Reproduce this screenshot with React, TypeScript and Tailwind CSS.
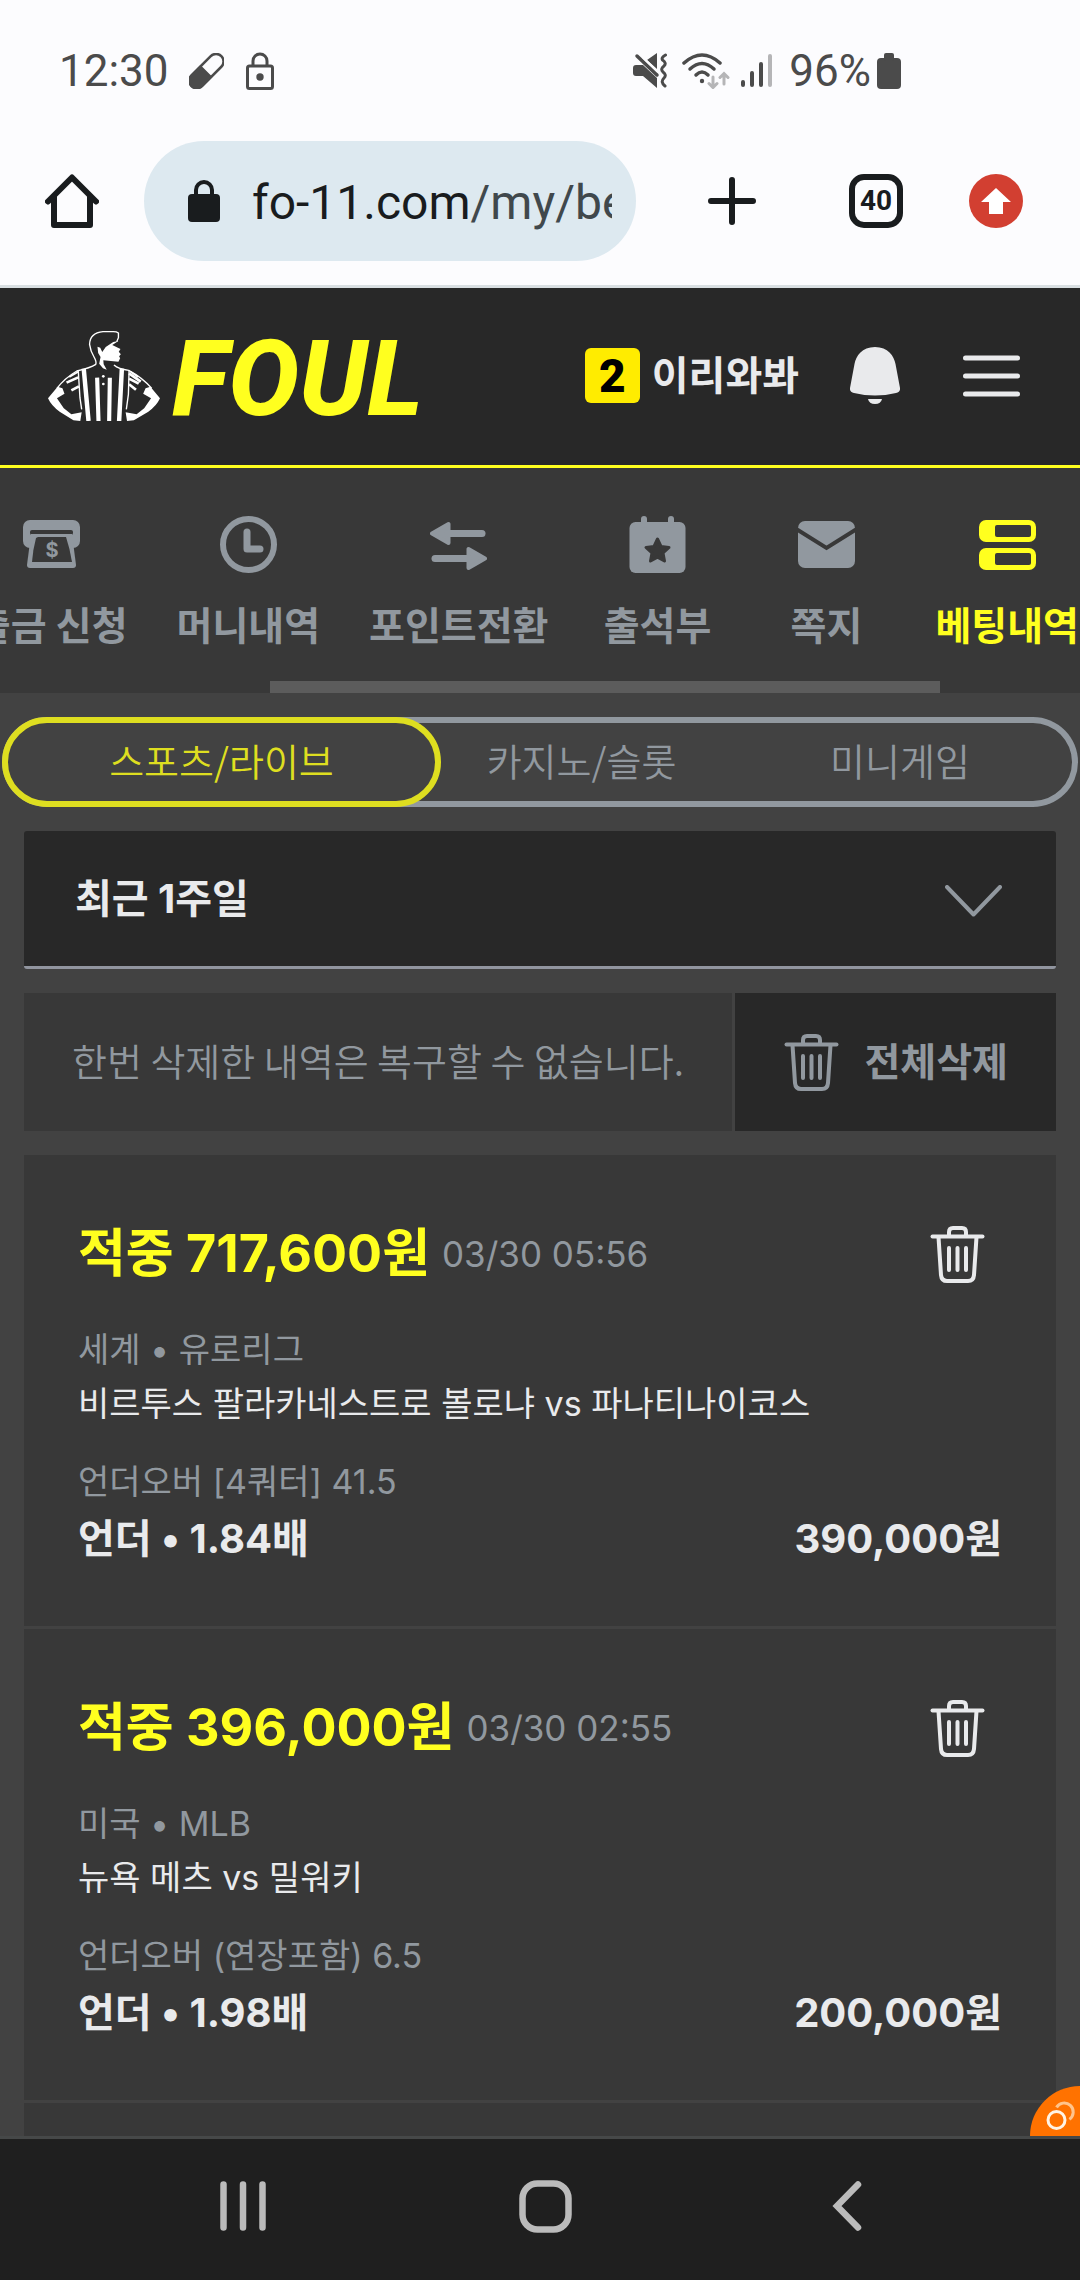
import type { ReactNode } from "react";

interface Bet {
  payout: string;
  date: string;
  league: string;
  match: string;
  market: string;
  pick: string;
  stake: string;
}

const bets: Bet[] = [
  {
    payout: "적중 717,600원",
    date: "03/30 05:56",
    league: "세계 • 유로리그",
    match: "비르투스 팔라카네스트로 볼로냐 vs 파나티나이코스",
    market: "언더오버 [4쿼터] 41.5",
    pick: "언더 • 1.84배",
    stake: "390,000원",
  },
  {
    payout: "적중 396,000원",
    date: "03/30 02:55",
    league: "미국 • MLB",
    match: "뉴욕 메츠 vs 밀워키",
    market: "언더오버 (연장포함) 6.5",
    pick: "언더 • 1.98배",
    stake: "200,000원",
  },
];

function WithdrawIcon() {
  return (
    <svg width="57" height="57" viewBox="0 0 57 57" fill="currentColor">
      <rect x="0" y="4" width="57" height="28" rx="7" />
      <rect x="7" y="14" width="43" height="5" rx="2" fill="#383838" />
      <path d="M8 18 H49 L53 49 Q53 52 50 52 H7 Q4 52 4 49 Z" />
      <path d="M15 21 H43 Q47 33 49 46 H9 Q10 33 13 22 Z" fill="#383838" />
      <text x="29" y="41" textAnchor="middle" className="font-['Inter'] text-[20px] font-bold">
        $
      </text>
    </svg>
  );
}

function ClockIcon() {
  return (
    <svg width="57" height="57" viewBox="0 0 57 57" fill="none" stroke="currentColor">
      <circle cx="28.5" cy="28.5" r="25.5" strokeWidth="6" />
      <path d="M27 16 V33 H40" strokeWidth="7" strokeLinecap="round" strokeLinejoin="round" />
    </svg>
  );
}

function TransferIcon() {
  return (
    <svg width="57" height="57" viewBox="0 0 57 57" fill="currentColor" stroke="currentColor" strokeLinejoin="round" strokeLinecap="round">
      <path d="M2 17.5 L18.5 8 V27 Z" strokeWidth="4" />
      <path d="M18 17.5 H52" strokeWidth="7" />
      <path d="M55 42.5 L38.5 33 V52 Z" strokeWidth="4" />
      <path d="M5 42.5 H38" strokeWidth="7" />
    </svg>
  );
}

function CalendarIcon() {
  return (
    <svg width="57" height="57" viewBox="0 0 57 57" fill="currentColor">
      <rect x="0.5" y="6" width="56" height="51" rx="6" />
      <rect x="12" y="0" width="6" height="12" rx="3" />
      <rect x="39" y="0" width="6" height="12" rx="3" />
      <path
        d="M28.5 23 L32 30.5 L40 31.5 L34 37 L35.5 45 L28.5 41.2 L21.5 45 L23 37 L17 31.5 L25 30.5 Z"
        fill="#383838"
        stroke="#383838"
        strokeWidth="3"
        strokeLinejoin="round"
      />
    </svg>
  );
}

function MailIcon() {
  return (
    <svg width="57" height="57" viewBox="0 0 57 57">
      <rect x="0" y="5" width="57" height="47" rx="7" fill="currentColor" />
      <path d="M-1 13.5 L28.5 32 L58 13.5" fill="none" stroke="#383838" strokeWidth="4" />
    </svg>
  );
}

function SlipIcon() {
  return (
    <svg width="57" height="57" viewBox="0 0 57 57">
      <rect x="0" y="4" width="57" height="22" rx="7" fill="currentColor" />
      <rect x="0" y="32" width="57" height="22" rx="7" fill="currentColor" />
      <rect x="16" y="9" width="36" height="12" rx="2" fill="#383838" />
      <rect x="16" y="37" width="36" height="12" rx="2" fill="#383838" />
    </svg>
  );
}

function TrashIcon() {
  return (
    <svg width="57" height="57" viewBox="0 0 57 57" fill="none" stroke="currentColor" strokeWidth="4" strokeLinecap="round" strokeLinejoin="round">
      <path d="M3.5 10.5 H53.5" />
      <path d="M20 10 V6 Q20 2 24 2 H33 Q37 2 37 6 V10" />
      <path d="M9.5 11 L12 49 Q12.5 55 18 55 H39 Q44.5 55 45 49 L47.5 11" />
      <path d="M20 22 V44 M28.5 22 V44 M37 22 V44" />
    </svg>
  );
}

function RefereeLogo() {
  return (
    <svg width="112" height="90" viewBox="0 0 326 270" preserveAspectRatio="none" fill="none" stroke="#fff">
      <path
        d="M200 32 L205 20 V6 Q200 2 190 2 H160 Q122 6 121 40 Q124 62 134 78 Q142 92 139 100 Q124 110 84 120 Q48 142 26 172"
        strokeWidth="4"
      />
      <path d="M192 102 Q205 114 235 118 Q275 140 302 172" strokeWidth="4" />
      <path
        d="M144 47 L152 50 L158 63 L168 48 L190 33 L205 30 L187 42 L211 54 L206 62 L212 70 L207 76 L210 82 L205 92 L161 88 L162 100 L171 116 L160 112 L149 98 L153 78 L146 66 Z"
        fill="#fff"
        stroke="none"
      />
      <path d="M104 113 L118 270 M215 113 L207 270" strokeWidth="13" />
      <path d="M143 140 L147 270 M180 140 L178 270" strokeWidth="12" />
      <path d="M88 118 L93 200 L98 235 M236 118 L234 190 L228 235" strokeWidth="4" />
      <path d="M54 155 L88 139 M68 178 L90 166 M236 127 L270 152 M236 143 L264 158 M236 160 L256 176" strokeWidth="8" />
      <path d="M62 138 L88 122 M262 138 L240 122" strokeWidth="5" />
      <path
        d="M28 167 L0 202 Q10 225 34 242 L74 268 L94 270 L98 244 L68 250 L46 232 L26 202 L48 188 L42 172 Z"
        fill="#fff"
        stroke="none"
      />
      <path
        d="M298 167 L326 202 Q316 225 292 242 L250 268 L230 270 L226 244 L258 250 L280 232 L300 202 L277 188 L284 172 Z"
        fill="#fff"
        stroke="none"
      />
      <circle cx="161" cy="136" r="4" fill="#fff" stroke="none" />
      <circle cx="161" cy="159" r="4" fill="#fff" stroke="none" />
    </svg>
  );
}

function StatusBar() {
  return (
    <div className="flex h-[141px] items-center pl-[59px] pr-[179px] font-['Roboto',sans-serif] text-[44px] text-[#4b4b4b]">
      <span>12:30</span>
      <svg className="ml-5" width="35" height="36" viewBox="0 0 35 36">
        <g transform="rotate(45 17.5 18)">
          <rect x="10" y="-3" width="15" height="42" rx="7.5" fill="none" stroke="currentColor" strokeWidth="2.5" />
          <path d="M9 18 H26 V32 A8.5 8.5 0 0 1 9 32 Z" fill="currentColor" />
        </g>
      </svg>
      <svg className="ml-[22px]" width="28" height="38" viewBox="0 0 28 38" fill="none" stroke="currentColor" strokeWidth="3">
        <rect x="1.5" y="14" width="25" height="22.5" rx="2" />
        <path d="M7 14 V9 A7 7 0 0 1 21 9 V14" />
        <circle cx="14" cy="25" r="3.7" fill="currentColor" stroke="none" />
      </svg>
      <svg className="ml-auto" width="34" height="35" viewBox="0 0 34 35">
        <path d="M3 12 H10 L24 25 V35 L10 23 H3 Q0 23 0 20 V15 Q0 12 3 12 Z M14 7 L24 0 V16 Z" fill="currentColor" />
        <path d="M4 3 L24 22" stroke="currentColor" strokeWidth="3.5" strokeLinecap="round" />
        <path d="M10 4.5 L25 19" stroke="#fcfcfe" strokeWidth="2" />
        <path
          d="M32.5 2 Q28 4.5 29.5 7 Q34 10 31 13 Q27 16 30 19 Q34 22 31 25 Q27 29 32 33"
          fill="none"
          stroke="currentColor"
          strokeWidth="3"
          strokeLinecap="round"
        />
      </svg>
      <svg className="ml-[15px]" width="48" height="36" viewBox="0 0 48 36" fill="none" stroke="currentColor" strokeWidth="3.5" strokeLinecap="round">
        <path d="M2 10 Q20 -6 38 10" />
        <path d="M8 16 Q20 5 32 16" />
        <path d="M14 22 Q20 16 26 22" />
        <circle cx="20" cy="28" r="2.2" fill="currentColor" stroke="none" />
        <path d="M31 24 V34 M27 30.5 L31 34.5 L35 30.5 M42 31 V21 M38 24.5 L42 20.5 L46 24.5" stroke="#b5b5b7" strokeWidth="3" />
      </svg>
      <svg className="ml-[11px]" width="32" height="35" viewBox="0 0 32 35" strokeWidth="4" strokeLinecap="round" stroke="currentColor">
        <path d="M2 29 V32 M11 20 V32 M20 11 V32" />
        <path d="M29 3 V32" stroke="#b5b5b7" />
      </svg>
      <span className="ml-4">96%</span>
      <svg className="ml-1.5" width="24" height="36" viewBox="0 0 24 36" fill="currentColor">
        <rect x="0" y="5" width="24" height="31" rx="4" />
        <rect x="7" y="0" width="10" height="8" rx="2" />
      </svg>
    </div>
  );
}

function BrowserBar() {
  return (
    <div className="flex items-center border-b-[3px] border-[#d9dfe2] pb-6 pl-[45px] pr-[57px] text-[#191c1e]">
      <button aria-label="Home">
        <svg width="54" height="54" viewBox="0 0 54 54" fill="none" stroke="currentColor" strokeWidth="6" strokeLinecap="round" strokeLinejoin="round">
          <path d="M3 27.5 L27 3.5 L51 27.5" />
          <path d="M9 23 V51 H45 V23" />
        </svg>
      </button>
      <button className="ml-[45px] flex h-[120px] min-w-0 flex-1 items-center rounded-full bg-[#dde9f0] pl-11 pr-6">
        <svg className="shrink-0" width="32" height="42" viewBox="0 0 32 42">
          <rect x="0" y="14" width="32" height="28" rx="4" fill="currentColor" />
          <path d="M8 16 V10 A8 8 0 0 1 24 10 V16" fill="none" stroke="currentColor" strokeWidth="4" />
        </svg>
        <span className="ml-8 overflow-hidden whitespace-nowrap pt-1 font-['Roboto',sans-serif] text-[48px]">
          fo-11.com<span className="text-[#40484c]">/my/bet</span>
        </span>
      </button>
      <button aria-label="New tab" className="ml-[72px]">
        <svg width="48" height="48" viewBox="0 0 48 48" stroke="currentColor" strokeWidth="6" strokeLinecap="round">
          <path d="M24 3 V45 M3 24 H45" />
        </svg>
      </button>
      <button className="ml-[93px] flex size-[54px] items-center justify-center rounded-[15px] border-[6px] border-[#191c1e] font-['Roboto',sans-serif] text-[28px] font-bold leading-none">
        40
      </button>
      <button aria-label="Update" className="ml-[66px]">
        <svg width="54" height="54" viewBox="0 0 54 54">
          <circle cx="27" cy="27" r="27" fill="#d23f31" />
          <path d="M27 14 L42 28 H34 V40 H20 V28 H12 Z" fill="#fff" />
        </svg>
      </button>
    </div>
  );
}

function SiteHeader() {
  return (
    <header className="flex h-[180px] items-center border-b-[3px] border-[#ffff1f] bg-[#282828] pb-0.5 pl-12 pr-[60px] text-[#e9eaec]">
      <a href="#" className="flex items-center gap-3">
        <RefereeLogo />
        <span className="pt-1.5 font-['Roboto',sans-serif] text-[106px] font-extrabold italic leading-[90px] text-[#ffff1f]">FOUL</span>
      </a>
      <span className="ml-auto flex size-[55px] items-center justify-center rounded-md bg-[#ffec00] font-['Roboto',sans-serif] text-[46px] font-black leading-none text-black">
        2
      </span>
      <span className="ml-3 text-[40px] font-bold">이리와봐</span>
      <button aria-label="알림" className="ml-[51px]">
        <svg width="50" height="57" viewBox="0 0 50 57" fill="currentColor">
          <path d="M25 0 C38 0 44 9 45.5 17 L50 41 Q50.5 45 46 46 Q25 51 4 46 Q-0.5 45 0 41 L4.5 17 C6 9 12 0 25 0 Z" />
          <path d="M18 52 H32 Q31 57 25 57 Q19 57 18 52 Z" />
        </svg>
      </button>
      <button aria-label="메뉴" className="ml-[63px]">
        <svg width="57" height="42" viewBox="0 0 57 42" stroke="currentColor" strokeWidth="5" strokeLinecap="round">
          <path d="M2.5 3 H54.5 M2.5 21 H54.5 M2.5 39 H54.5" />
        </svg>
      </button>
    </header>
  );
}

function NavItem({ icon, label, active = false }: { icon: ReactNode; label: string; active?: boolean }) {
  return (
    <a
      href="#"
      className={`flex min-w-[120px] shrink-0 flex-col items-center whitespace-nowrap text-[39px] font-bold leading-[60px] ${
        active ? "text-[#ffff1f]" : "text-[#91989f]"
      }`}
    >
      {icon}
      <span className="mt-[23px]">{label}</span>
    </a>
  );
}

function MenuBar() {
  return (
    <nav className="bg-[#383838] pt-12">
      <div className="flex justify-end gap-[49px] overflow-hidden pr-px">
        <NavItem icon={<WithdrawIcon />} label="출금 신청" />
        <NavItem icon={<ClockIcon />} label="머니내역" />
        <NavItem icon={<TransferIcon />} label="포인트전환" />
        <NavItem icon={<CalendarIcon />} label="출석부" />
        <NavItem icon={<MailIcon />} label="쪽지" />
        <NavItem icon={<SlipIcon />} label="베팅내역" active />
      </div>
      <div className="mt-[25px] flex h-3">
        <div className="ml-[25%] w-[62%] bg-[#5c5c5c]" />
      </div>
    </nav>
  );
}

function BetCard({ bet }: { bet: Bet }) {
  return (
    <article className="border-b-[3px] border-[#424242] px-[54px] pb-[57px] pt-[61px] text-[#e9eaec]">
      <div className="flex h-[76px] items-center">
        <strong className="text-[52px] font-bold text-[#ffff1f]">{bet.payout}</strong>
        <time className="ml-3 text-[35px] text-[#91989f]">{bet.date}</time>
        <button aria-label="삭제" className="ml-auto mr-4">
          <TrashIcon />
        </button>
      </div>
      <p className="mt-[31px] text-[34px] leading-[54px] text-[#91989f]">{bet.league}</p>
      <p className="text-[34px] leading-[54px]">{bet.match}</p>
      <p className="mt-6 text-[34px] leading-[54px] text-[#91989f]">{bet.market}</p>
      <div className="flex justify-between text-[40px] font-bold leading-[60px]">
        <span>{bet.pick}</span>
        <span>{bet.stake}</span>
      </div>
    </article>
  );
}

export default function App() {
  return (
    <div className="flex min-h-screen flex-col bg-[#fcfcfe] font-['Inter','Noto_Sans_CJK_KR',sans-serif]">
      <StatusBar />
      <BrowserBar />
      <SiteHeader />
      <MenuBar />

      <main className="relative flex flex-1 flex-col bg-[#424242] px-6 pt-6">
        <div className="-mx-[22px] grid h-[90px] grid-cols-[439fr_281fr_356fr] rounded-full font-['Noto_Sans_CJK_KR',sans-serif] text-[38px] font-[350] text-[#91989f] shadow-[inset_0_0_0_6px_#91989f]">
          <button className="rounded-full border-[6px] border-[#dede20] bg-[#424242] pb-1.5 text-[#dede20]">스포츠/라이브</button>
          <button className="pb-1.5">카지노/슬롯</button>
          <button className="pb-1.5">미니게임</button>
        </div>

        <div className="relative mt-6">
          <select
            aria-label="기간"
            className="h-[138px] w-full appearance-none rounded-[3px] border-b-[3px] border-[#91959f] bg-[#282828] pl-[51px] text-[40px] font-bold text-[#e9eaec]"
          >
            <option>최근 1주일</option>
          </select>
          <svg className="pointer-events-none absolute right-[54px] top-[54px] text-[#91989f]" width="57" height="32" viewBox="0 0 57 32" fill="none" stroke="currentColor" strokeWidth="4" strokeLinecap="round" strokeLinejoin="round">
            <path d="M2 2 L28.5 29.5 L55 2" />
          </svg>
        </div>

        <div className="mt-6 flex h-[138px] gap-[3px] text-[#91989f]">
          <p className="flex flex-1 items-center whitespace-nowrap bg-[#383838] pb-1.5 pl-12 font-['Noto_Sans_CJK_KR',sans-serif] text-[38px] font-[350]">
            한번 삭제한 내역은 복구할 수 없습니다.
          </p>
          <button className="flex items-center gap-6 bg-[#282828] px-12 text-[39px] font-bold">
            <TrashIcon />
            전체삭제
          </button>
        </div>

        <section className="mt-6 flex-1 bg-[#383838] pb-[33px]">
          {bets.map((bet) => (
            <BetCard key={bet.date} bet={bet} />
          ))}
        </section>

        <button aria-label="도구" className="absolute bottom-0 right-0 rounded-tl-full bg-[#ff7200]">
          <svg width="50" height="50" viewBox="0 0 50 50" fill="none" strokeWidth="3">
            <circle cx="26.5" cy="34" r="8.5" stroke="#fff3e5" />
            <path d="M26.5 21.4 A9 9 0 1 1 39.4 33.4" stroke="#ffc48c" />
          </svg>
        </button>
      </main>

      <footer className="flex h-36 items-center border-t-[3px] border-[#464848] bg-[#1f1f1f] pb-[7px] pl-[92px] pr-[82px] text-[#bbb]">
        <button aria-label="최근 앱" className="flex flex-1 justify-center">
          <svg width="46" height="50" viewBox="0 0 46 50" stroke="currentColor" strokeWidth="6.5" strokeLinecap="round">
            <path d="M3.5 3.5 V46.5 M23 3.5 V46.5 M42.5 3.5 V46.5" />
          </svg>
        </button>
        <button aria-label="홈" className="flex flex-1 justify-center">
          <svg width="53" height="53" viewBox="0 0 53 53" fill="none" stroke="currentColor" strokeWidth="6.5">
            <rect x="3.5" y="3.5" width="46" height="46" rx="15" />
          </svg>
        </button>
        <button aria-label="뒤로" className="flex flex-1 justify-center">
          <svg width="30" height="50" viewBox="0 0 30 50" fill="none" stroke="currentColor" strokeWidth="6.5" strokeLinecap="round">
            <path d="M26 3.5 L5 25 L26 46.5" />
          </svg>
        </button>
      </footer>
    </div>
  );
}
